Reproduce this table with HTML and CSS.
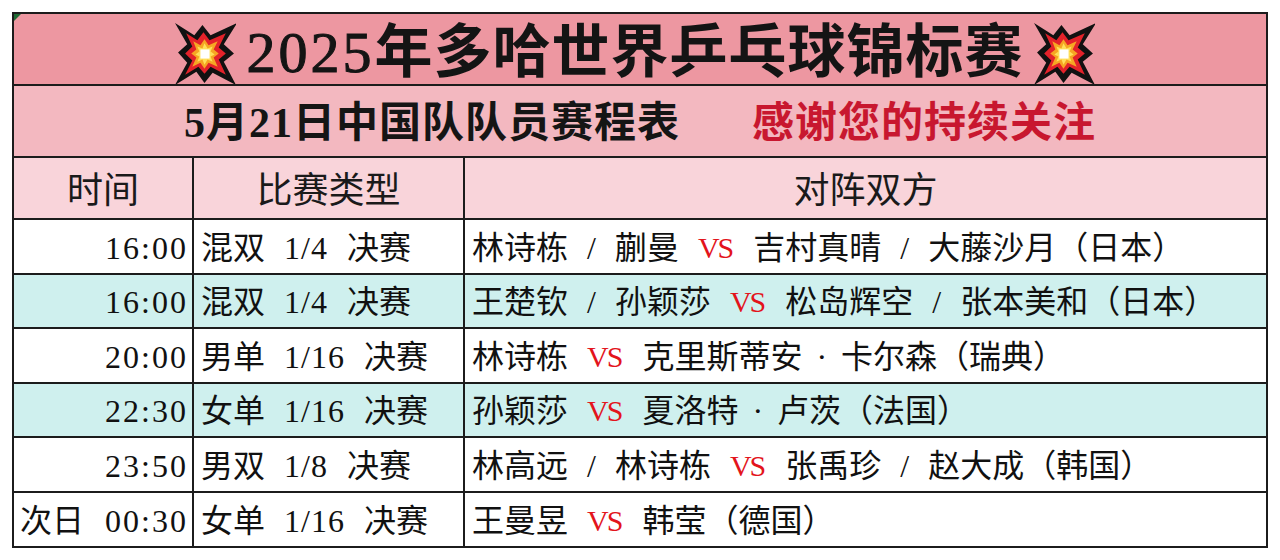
FILE: index.html
```html
<!DOCTYPE html>
<html lang="zh-CN">
<head>
<meta charset="utf-8">
<title>2025年多哈世界乒乓球锦标赛</title>
<link rel="stylesheet" href="styles.css">
</head>
<body>
<div class="sheet">
  <span class="corner"></span>
  <div class="row title-row">
    <svg class="boom" viewBox="0 0 60 60" aria-hidden="true">
      <polygon fill="#111" points="0,0 19,12 27,2 35,12 61,0 48,21 58,30 48,38 60,61 37,49 29,59 21,48 0,61 12,39 3,29 12,21"/>
      <polygon fill="#e3222a" points="11,10 22,17 28,9 34,17 50,10 43,24 50,30 43,36 50,51 35,43 29,50 23,43 10,51 17,37 10,30 17,23"/>
      <polygon fill="#f6a623" points="18,18 25,22 29,16 33,22 42,18 38,26 43,30 38,34 42,43 33,39 29,45 25,39 17,43 21,34 16,30 21,26"/>
      <polygon fill="#ffe05a" points="22,23 27,25 29,20 32,25 37,23 35,28 39,31 35,33 37,38 32,36 29,41 27,36 22,38 24,33 20,31 24,28"/>
      <rect x="25" y="26" width="9" height="9" fill="#fff"/>
    </svg>
    <h1 class="title"><span class="num">2025</span>年多哈世界乒乓球锦标赛</h1>
    <svg class="boom" viewBox="0 0 60 60" aria-hidden="true">
      <polygon fill="#111" points="0,0 19,12 27,2 35,12 61,0 48,21 58,30 48,38 60,61 37,49 29,59 21,48 0,61 12,39 3,29 12,21"/>
      <polygon fill="#e3222a" points="11,10 22,17 28,9 34,17 50,10 43,24 50,30 43,36 50,51 35,43 29,50 23,43 10,51 17,37 10,30 17,23"/>
      <polygon fill="#f6a623" points="18,18 25,22 29,16 33,22 42,18 38,26 43,30 38,34 42,43 33,39 29,45 25,39 17,43 21,34 16,30 21,26"/>
      <polygon fill="#ffe05a" points="22,23 27,25 29,20 32,25 37,23 35,28 39,31 35,33 37,38 32,36 29,41 27,36 22,38 24,33 20,31 24,28"/>
      <rect x="25" y="26" width="9" height="9" fill="#fff"/>
    </svg>
  </div>
  <div class="row sub-row">
    <span class="sub">5月21日中国队队员赛程表</span>
    <span class="thanks">感谢您的持续关注</span>
  </div>
  <div class="row grid head-row">
    <div class="cell c-center">时间</div>
    <div class="cell c-center">比赛类型</div>
    <div class="cell c-center">对阵双方</div>
  </div>
  <div class="row grid data">
    <div class="cell c-time"><span class="n">16:00</span></div>
    <div class="cell">混双 <span class="n">1/4</span> 决赛</div>
    <div class="cell">林诗栋 / 蒯曼 <span class="vs">VS</span> 吉村真晴 / 大藤沙月（日本）</div>
  </div>
  <div class="row grid data alt">
    <div class="cell c-time"><span class="n">16:00</span></div>
    <div class="cell">混双 <span class="n">1/4</span> 决赛</div>
    <div class="cell">王楚钦 / 孙颖莎 <span class="vs">VS</span> 松岛辉空 / 张本美和（日本）</div>
  </div>
  <div class="row grid data">
    <div class="cell c-time"><span class="n">20:00</span></div>
    <div class="cell">男单 <span class="n">1/16</span> 决赛</div>
    <div class="cell">林诗栋 <span class="vs">VS</span> 克里斯蒂安<span class="dot">·</span>卡尔森（瑞典）</div>
  </div>
  <div class="row grid data alt">
    <div class="cell c-time"><span class="n">22:30</span></div>
    <div class="cell">女单 <span class="n">1/16</span> 决赛</div>
    <div class="cell">孙颖莎 <span class="vs">VS</span> 夏洛特<span class="dot">·</span>卢茨（法国）</div>
  </div>
  <div class="row grid data">
    <div class="cell c-time"><span class="n">23:50</span></div>
    <div class="cell">男双 <span class="n">1/8</span> 决赛</div>
    <div class="cell">林高远 / 林诗栋 <span class="vs">VS</span> 张禹珍 / 赵大成（韩国）</div>
  </div>
  <div class="row grid data last">
    <div class="cell c-time">次日 <span class="n">00:30</span></div>
    <div class="cell">女单 <span class="n">1/16</span> 决赛</div>
    <div class="cell">王曼昱 <span class="vs">VS</span> 韩莹（德国）</div>
  </div>
</div>
</body>
</html>
```

FILE: styles.css
```css
html, body {
  margin: 0;
  padding: 0;
  background: #ffffff;
}

body {
  font-family: "Liberation Serif", "Noto Sans CJK SC", serif;
  color: #111;
}

.sheet {
  position: relative;
  margin: 12px 0 0 12px;
  width: 1256px;
  border: 2px solid #1c1c1c;
  box-sizing: border-box;
}

.corner {
  position: absolute;
  left: 0;
  top: 0;
  width: 0;
  height: 0;
  border-top: 7px solid #1f6a34;
  border-right: 7px solid transparent;
}

.row {
  border-bottom: 2px solid #1c1c1c;
  box-sizing: border-box;
}

.row.last {
  border-bottom: none;
}

.title-row {
  height: 72px;
  background: #ed97a1;
  display: flex;
  align-items: center;
  justify-content: center;
  gap: 10px;
  padding-top: 8px;
  padding-right: 10px;
}

.boom {
  width: 61px;
  height: 61px;
  flex: none;
}

.title {
  margin: 0;
  font-size: 58px;
  font-weight: 700;
  line-height: 1;
  color: #141414;
  letter-spacing: 1px;
}

.title .num {
  font-weight: 400;
  letter-spacing: 3px;
  -webkit-text-stroke: 1px #141414;
}

.sub-row {
  height: 72px;
  background: #f3b8c0;
  display: flex;
  align-items: center;
  justify-content: center;
  gap: 72px;
  padding-top: 4px;
  font-size: 42px;
  font-weight: 700;
  line-height: 1;
}

.sub {
  color: #151515;
  letter-spacing: 1px;
}

.thanks {
  color: #c8172f;
  letter-spacing: 1px;
}

.grid {
  display: grid;
  grid-template-columns: 180px 271px 1fr;
}

.head-row {
  height: 62px;
  background: #f9d4da;
  font-size: 36px;
  color: #1a1a1a;
}

.cell {
  display: flex;
  align-items: center;
  border-right: 2px solid #1c1c1c;
  padding: 3px 0 0 7px;
  white-space: pre;
  word-spacing: 11px;
  line-height: 1;
}

.cell:last-child {
  border-right: none;
}

.c-center {
  justify-content: center;
  padding-left: 0;
  padding-top: 6px;
}

.c-time {
  justify-content: flex-end;
  padding-left: 0;
  padding-right: 4px;
  word-spacing: 13px;
}

.n {
  letter-spacing: 1px;
}

.c-time .n {
  letter-spacing: 2px;
}

.data {
  height: 54.5px;
  font-size: 32px;
  background: #ffffff;
}

.data.last {
  height: 53px;
}

.data.alt {
  background: #cff0ee;
}

.vs {
  color: #e3141c;
  font-size: 30px;
  letter-spacing: -2px;
  padding-right: 2px;
}

.dot {
  padding: 0 14px;
}
```
